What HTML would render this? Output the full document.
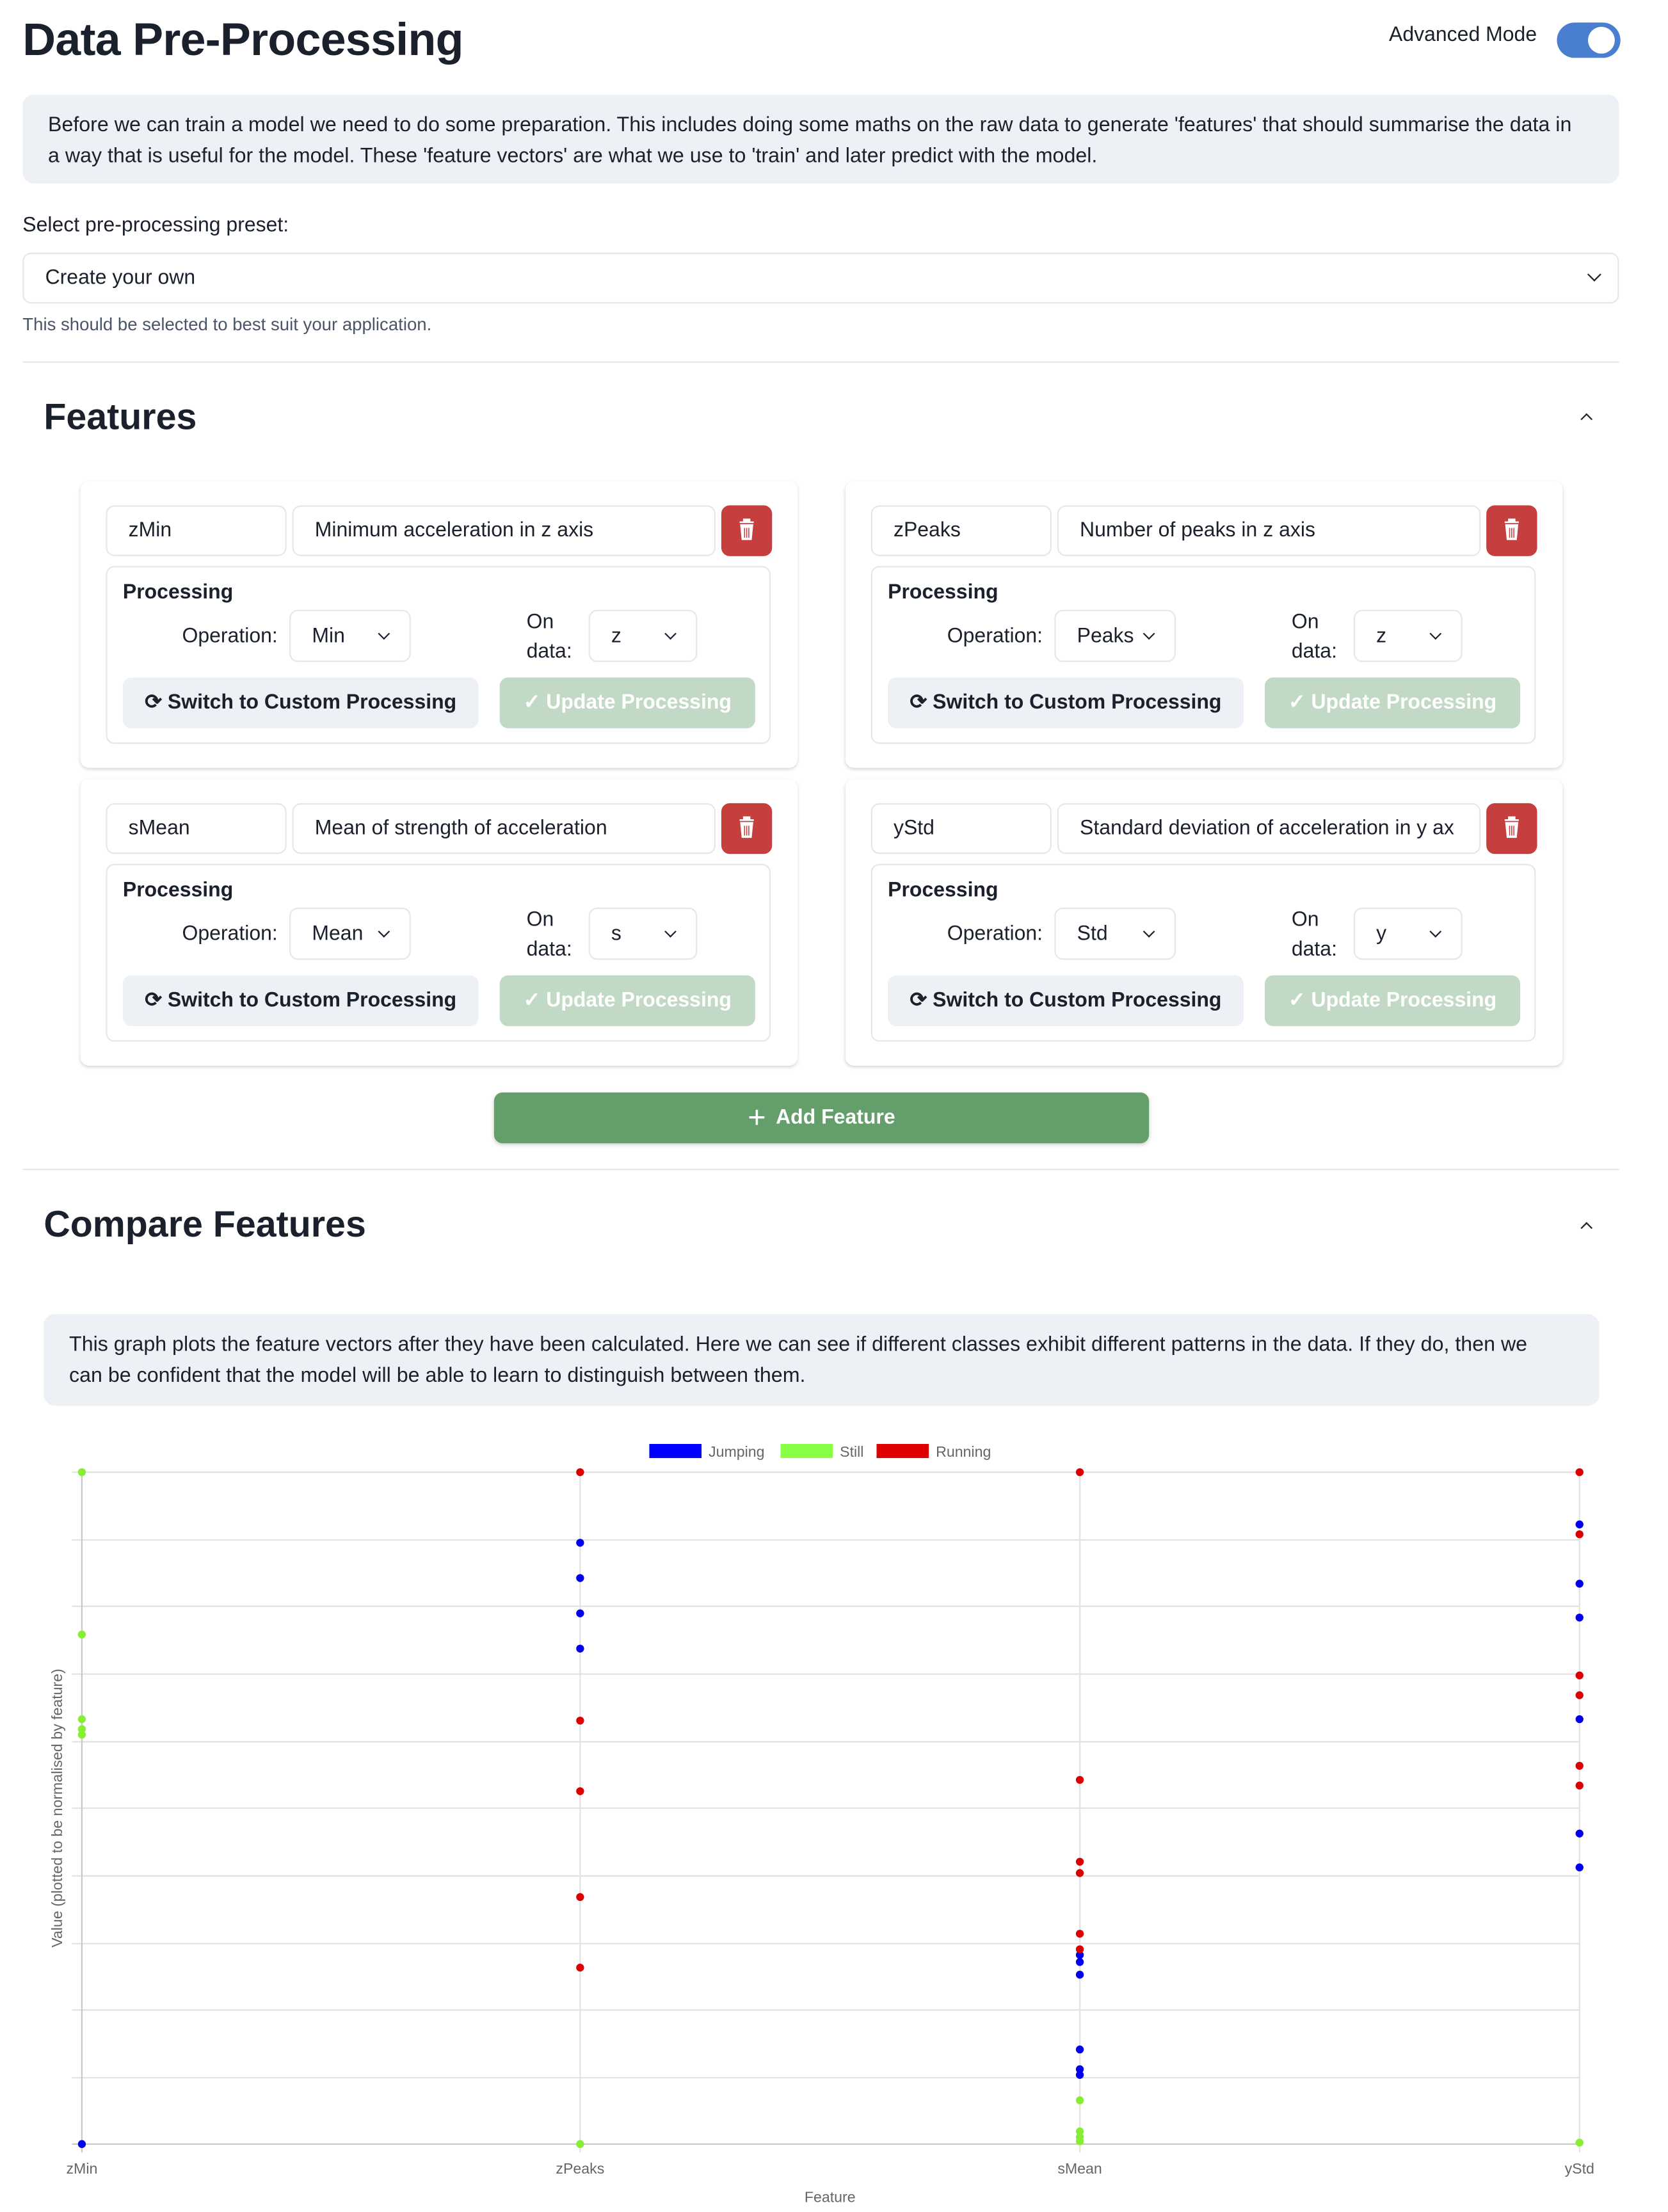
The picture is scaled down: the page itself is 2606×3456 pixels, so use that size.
<!DOCTYPE html>
<html><head><meta charset="utf-8"><style>
*{box-sizing:border-box;margin:0;padding:0}
html,body{width:2606px;height:3456px;overflow:hidden;background:#fff}
#w{width:1188px;height:1576px;transform:scale(2.2053);transform-origin:0 0;position:relative;font-family:"Liberation Sans",sans-serif;color:#1a202c}
.a{position:absolute}
h1{position:absolute;left:16px;top:10px;font-size:32.5px;font-weight:700;letter-spacing:-0.3px}
.info{position:absolute;background:#edf0f5;border-radius:8px;font-size:14.6px;line-height:22px;color:#1a202c;padding:11px 18px}
.inp{position:absolute;border:1px solid #e2e8f0;border-radius:6px;background:#fff;font-size:14.5px;padding-left:15px;display:flex;align-items:center}
.card{position:absolute;width:508px;height:203px;border-radius:6px;box-shadow:0 1px 3px rgba(0,0,0,.12),0 1px 2px rgba(0,0,0,.06);background:#fff}
.proc{position:absolute;left:18px;top:60px;width:471px;height:126px;border:1px solid #e2e8f0;border-radius:6px}
.btn{position:absolute;border-radius:6px;font-size:14.5px;font-weight:700;display:flex;align-items:center;justify-content:center;gap:7px}
.chev{position:absolute;width:7px;height:7px;border-right:1.6px solid #1a202c;border-bottom:1.6px solid #1a202c;transform:rotate(45deg)}
.lbl{position:absolute;font-size:14.5px}
.hr{position:absolute;left:16px;width:1131px;height:1px;background:#e2e8f0}
</style></head><body><div id="w">
<h1>Data Pre-Processing</h1>
<div class="a" style="left:984px;top:17px;font-size:14.5px">Advanced Mode</div>
<div class="a" style="left:1103px;top:16px;width:45px;height:25px;border-radius:13px;background:#4a7fd0"><div class="a" style="left:22px;top:3px;width:19px;height:19px;border-radius:50%;background:#fff"></div></div>
<div class="info" style="left:16px;top:67px;width:1131px;height:63px;padding-right:29px">Before we can train a model we need to do some preparation. This includes doing some maths on the raw data to generate 'features' that should summarise the data in a way that is useful for the model. These 'feature vectors' are what we use to 'train' and later predict with the model.</div>
<div class="a" style="left:16px;top:152px;font-size:14.5px;font-weight:500">Select pre-processing preset:</div>
<div class="inp" style="left:16px;top:179px;width:1131px;height:36px">Create your own</div>
<div class="chev" style="left:1126px;top:191px"></div>
<div class="a" style="left:16px;top:223px;font-size:12.5px;color:#4a5568">This should be selected to best suit your application.</div>
<div class="hr" style="top:256px"></div>
<div class="a" style="left:31px;top:280px;font-size:26px;font-weight:700">Features</div>
<div class="chev" style="left:1121px;top:294px;transform:rotate(225deg);width:6px;height:6px"></div>

<div class="btn" style="left:350px;top:774px;width:464px;height:36px;background:#649e6a;color:#fff;font-weight:600;box-shadow:0 1px 3px rgba(0,0,0,.2)"><span style="font-size:22px;font-weight:400;line-height:1">+</span>Add Feature</div>
<div class="hr" style="top:828px"></div>
<div class="a" style="left:31px;top:852px;font-size:26px;font-weight:700">Compare Features</div>
<div class="chev" style="left:1121px;top:867px;transform:rotate(225deg);width:6px;height:6px"></div>
<div class="info" style="left:31px;top:931px;width:1102px;height:65px;padding-right:38px">This graph plots the feature vectors after they have been calculated. Here we can see if different classes exhibit different patterns in the data. If they do, then we can be confident that the model will be able to learn to distinguish between them.</div>

<svg class="a" style="left:0;top:1010px" width="1188" height="566" viewBox="0 1010 1188 566" font-family="Liberation Sans, sans-serif">
<g stroke="#e2e2e2" stroke-width="1">
<line x1="51" x2="1119" y1="1043" y2="1043"/><line x1="51" x2="1119" y1="1091" y2="1091"/><line x1="51" x2="1119" y1="1138" y2="1138"/><line x1="51" x2="1119" y1="1186" y2="1186"/><line x1="51" x2="1119" y1="1234" y2="1234"/><line x1="51" x2="1119" y1="1281" y2="1281"/><line x1="51" x2="1119" y1="1329" y2="1329"/><line x1="51" x2="1119" y1="1377" y2="1377"/><line x1="51" x2="1119" y1="1424" y2="1424"/><line x1="51" x2="1119" y1="1472" y2="1472"/>
<line x1="411" x2="411" y1="1043" y2="1525"/><line x1="765" x2="765" y1="1043" y2="1525"/><line x1="1119" x2="1119" y1="1043" y2="1525"/>
</g>
<g stroke="#c8c8c8"><line x1="58" x2="58" y1="1043" y2="1525"/><line x1="51" x2="1119" y1="1519" y2="1519"/></g>
<rect x="460" y="1023" width="37" height="10" fill="#0000ff"/><text x="502" y="1032" font-size="10.5" fill="#666">Jumping</text>
<rect x="553" y="1023" width="37" height="10" fill="#88ff44"/><text x="595" y="1032" font-size="10.5" fill="#666">Still</text>
<rect x="621" y="1023" width="37" height="10" fill="#dd0000"/><text x="663" y="1032" font-size="10.5" fill="#666">Running</text>
<g font-size="10.5" fill="#666" text-anchor="middle"><text x="58" y="1540">zMin</text><text x="411" y="1540">zPeaks</text><text x="765" y="1540">sMean</text><text x="1119" y="1540">yStd</text><text x="588" y="1560">Feature</text>
<text transform="translate(44,1281) rotate(-90)">Value (plotted to be normalised by feature)</text></g>
<g fill="#88ee33"><circle cx="58" cy="1043" r="2.8"/><circle cx="58" cy="1158" r="2.8"/><circle cx="58" cy="1218" r="2.8"/><circle cx="58" cy="1225" r="2.8"/><circle cx="58" cy="1229" r="2.8"/><circle cx="411" cy="1519" r="2.8"/><circle cx="765" cy="1488" r="2.8"/><circle cx="765" cy="1510" r="2.8"/><circle cx="765" cy="1514" r="2.8"/><circle cx="765" cy="1517" r="2.8"/><circle cx="1119" cy="1518" r="2.8"/></g>
<g fill="#0000ee"><circle cx="58" cy="1519" r="2.8"/><circle cx="411" cy="1093" r="2.8"/><circle cx="411" cy="1118" r="2.8"/><circle cx="411" cy="1143" r="2.8"/><circle cx="411" cy="1168" r="2.8"/><circle cx="765" cy="1385" r="2.8"/><circle cx="765" cy="1390" r="2.8"/><circle cx="765" cy="1399" r="2.8"/><circle cx="765" cy="1452" r="2.8"/><circle cx="765" cy="1466" r="2.8"/><circle cx="765" cy="1470" r="2.8"/><circle cx="1119" cy="1080" r="2.8"/><circle cx="1119" cy="1122" r="2.8"/><circle cx="1119" cy="1146" r="2.8"/><circle cx="1119" cy="1218" r="2.8"/><circle cx="1119" cy="1299" r="2.8"/><circle cx="1119" cy="1323" r="2.8"/></g>
<g fill="#dd0000"><circle cx="411" cy="1043" r="2.8"/><circle cx="411" cy="1219" r="2.8"/><circle cx="411" cy="1269" r="2.8"/><circle cx="411" cy="1344" r="2.8"/><circle cx="411" cy="1394" r="2.8"/><circle cx="765" cy="1043" r="2.8"/><circle cx="765" cy="1261" r="2.8"/><circle cx="765" cy="1319" r="2.8"/><circle cx="765" cy="1327" r="2.8"/><circle cx="765" cy="1370" r="2.8"/><circle cx="765" cy="1381" r="2.8"/><circle cx="1119" cy="1043" r="2.8"/><circle cx="1119" cy="1087" r="2.8"/><circle cx="1119" cy="1187" r="2.8"/><circle cx="1119" cy="1201" r="2.8"/><circle cx="1119" cy="1251" r="2.8"/><circle cx="1119" cy="1265" r="2.8"/></g>
</svg>

<div class="card" style="left:57px;top:341px">
<div class="inp" style="left:18px;top:17px;width:128px;height:36px">zMin</div>
<div class="inp" style="left:150px;top:17px;width:300px;height:36px">Minimum acceleration in z axis</div>
<div class="a" style="left:454px;top:17px;width:36px;height:36px;border-radius:6px;background:#c53f3f"><svg width="36" height="36"><path d="M13 12h10M16 12v-2h4v2M14 14h8l-1 10h-6z" fill="#fff" stroke="#fff" stroke-width="1.2"/><path d="M16.5 16v7M18 16v7M19.5 16v7" stroke="#c53f3f" stroke-width=".7"/></svg></div>
<div class="proc">
<div class="a" style="left:11px;top:10px;font-size:14.5px;font-weight:700">Processing</div>
<div class="lbl" style="left:53px;top:41px">Operation:</div>
<div class="inp" style="left:129px;top:30px;width:86px;height:37px">Min</div><div class="chev" style="left:193px;top:44px;width:6px;height:6px"></div>
<div class="lbl" style="left:297px;top:29px;line-height:21px">On<br>data:</div>
<div class="inp" style="left:341px;top:30px;width:77px;height:37px">z</div><div class="chev" style="left:396px;top:44px;width:6px;height:6px"></div>
<div class="btn" style="left:11px;top:78px;width:252px;height:36px;background:#edf0f5;color:#1a202c">⟳ Switch to Custom Processing</div>
<div class="btn" style="left:278px;top:78px;width:181px;height:36px;background:#c2d9c5;color:#fff">✓ Update Processing</div>
</div></div>
<div class="card" style="left:599px;top:341px">
<div class="inp" style="left:18px;top:17px;width:128px;height:36px">zPeaks</div>
<div class="inp" style="left:150px;top:17px;width:300px;height:36px">Number of peaks in z axis</div>
<div class="a" style="left:454px;top:17px;width:36px;height:36px;border-radius:6px;background:#c53f3f"><svg width="36" height="36"><path d="M13 12h10M16 12v-2h4v2M14 14h8l-1 10h-6z" fill="#fff" stroke="#fff" stroke-width="1.2"/><path d="M16.5 16v7M18 16v7M19.5 16v7" stroke="#c53f3f" stroke-width=".7"/></svg></div>
<div class="proc">
<div class="a" style="left:11px;top:10px;font-size:14.5px;font-weight:700">Processing</div>
<div class="lbl" style="left:53px;top:41px">Operation:</div>
<div class="inp" style="left:129px;top:30px;width:86px;height:37px">Peaks</div><div class="chev" style="left:193px;top:44px;width:6px;height:6px"></div>
<div class="lbl" style="left:297px;top:29px;line-height:21px">On<br>data:</div>
<div class="inp" style="left:341px;top:30px;width:77px;height:37px">z</div><div class="chev" style="left:396px;top:44px;width:6px;height:6px"></div>
<div class="btn" style="left:11px;top:78px;width:252px;height:36px;background:#edf0f5;color:#1a202c">⟳ Switch to Custom Processing</div>
<div class="btn" style="left:278px;top:78px;width:181px;height:36px;background:#c2d9c5;color:#fff">✓ Update Processing</div>
</div></div>
<div class="card" style="left:57px;top:552px">
<div class="inp" style="left:18px;top:17px;width:128px;height:36px">sMean</div>
<div class="inp" style="left:150px;top:17px;width:300px;height:36px">Mean of strength of acceleration</div>
<div class="a" style="left:454px;top:17px;width:36px;height:36px;border-radius:6px;background:#c53f3f"><svg width="36" height="36"><path d="M13 12h10M16 12v-2h4v2M14 14h8l-1 10h-6z" fill="#fff" stroke="#fff" stroke-width="1.2"/><path d="M16.5 16v7M18 16v7M19.5 16v7" stroke="#c53f3f" stroke-width=".7"/></svg></div>
<div class="proc">
<div class="a" style="left:11px;top:10px;font-size:14.5px;font-weight:700">Processing</div>
<div class="lbl" style="left:53px;top:41px">Operation:</div>
<div class="inp" style="left:129px;top:30px;width:86px;height:37px">Mean</div><div class="chev" style="left:193px;top:44px;width:6px;height:6px"></div>
<div class="lbl" style="left:297px;top:29px;line-height:21px">On<br>data:</div>
<div class="inp" style="left:341px;top:30px;width:77px;height:37px">s</div><div class="chev" style="left:396px;top:44px;width:6px;height:6px"></div>
<div class="btn" style="left:11px;top:78px;width:252px;height:36px;background:#edf0f5;color:#1a202c">⟳ Switch to Custom Processing</div>
<div class="btn" style="left:278px;top:78px;width:181px;height:36px;background:#c2d9c5;color:#fff">✓ Update Processing</div>
</div></div>
<div class="card" style="left:599px;top:552px">
<div class="inp" style="left:18px;top:17px;width:128px;height:36px">yStd</div>
<div class="inp" style="left:150px;top:17px;width:300px;height:36px;overflow:hidden;white-space:nowrap">Standard deviation of acceleration in y ax</div>
<div class="a" style="left:454px;top:17px;width:36px;height:36px;border-radius:6px;background:#c53f3f"><svg width="36" height="36"><path d="M13 12h10M16 12v-2h4v2M14 14h8l-1 10h-6z" fill="#fff" stroke="#fff" stroke-width="1.2"/><path d="M16.5 16v7M18 16v7M19.5 16v7" stroke="#c53f3f" stroke-width=".7"/></svg></div>
<div class="proc">
<div class="a" style="left:11px;top:10px;font-size:14.5px;font-weight:700">Processing</div>
<div class="lbl" style="left:53px;top:41px">Operation:</div>
<div class="inp" style="left:129px;top:30px;width:86px;height:37px">Std</div><div class="chev" style="left:193px;top:44px;width:6px;height:6px"></div>
<div class="lbl" style="left:297px;top:29px;line-height:21px">On<br>data:</div>
<div class="inp" style="left:341px;top:30px;width:77px;height:37px">y</div><div class="chev" style="left:396px;top:44px;width:6px;height:6px"></div>
<div class="btn" style="left:11px;top:78px;width:252px;height:36px;background:#edf0f5;color:#1a202c">⟳ Switch to Custom Processing</div>
<div class="btn" style="left:278px;top:78px;width:181px;height:36px;background:#c2d9c5;color:#fff">✓ Update Processing</div>
</div></div>
</div></body></html>
